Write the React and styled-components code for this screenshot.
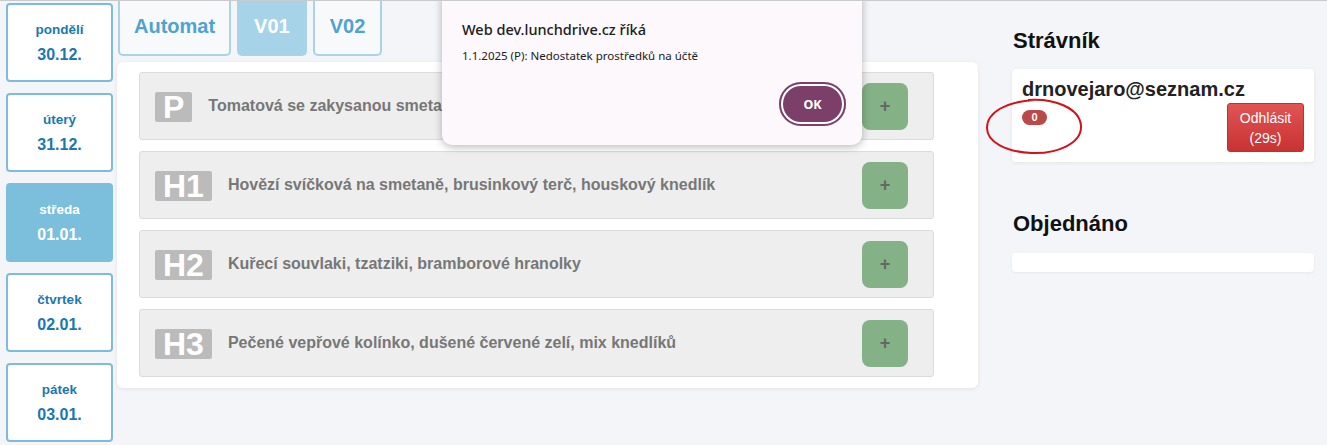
import React from "react";
import styled, { createGlobalStyle } from "styled-components";

const GlobalStyle = createGlobalStyle`
  html, body {
    margin: 0;
    padding: 0;
    background: #f4f5f9;
    font-family: "Liberation Sans", Arial, sans-serif;
  }
`;

const Page = styled.div`
  position: relative;
  display: flex;
  align-items: flex-start;
  height: 444px;
  overflow: hidden;
  border-top: 1px solid #c9cacd;
  background: #f4f5f9;
`;

/* Left column with days */
const DayColumn = styled.div`
  display: flex;
  flex-direction: column;
  gap: 11px;
  width: 107px;
  margin: 2px 0 0 6px;
`;

const DayBox = styled.div`
  box-sizing: border-box;
  height: 79px;
  border: 2px solid #7dbcdc;
  border-radius: 4px;
  background: ${(p) => (p.$active ? "#7bbfdd" : "#ffffff")};
  border-color: ${(p) => (p.$active ? "#7bbfdd" : "#7dbcdc")};
  color: ${(p) => (p.$active ? "#ffffff" : "#1a78b0")};
  display: flex;
  flex-direction: column;
  align-items: center;
  padding-top: 17px;
  font-weight: bold;
`;

const DayName = styled.div`
  font-size: 13.5px;
  line-height: 16px;
`;

const DayDate = styled.div`
  font-size: 16px;
  line-height: 18px;
  margin-top: 8px;
`;

/* Middle column */
const Main = styled.div`
  width: 861px;
  margin-left: 4px;
`;

const Tabs = styled.div`
  display: flex;
  gap: 6px;
  padding-left: 1px;
`;

const Tab = styled.div`
  box-sizing: border-box;
  height: 55px;
  padding: 0 ${(p) => p.$pad || 14}px 2px;
  border: 2px solid #a9d3e6;
  border-top: none;
  border-radius: 0 0 5px 5px;
  background: ${(p) => (p.$active ? "#a6d3e8" : "#f8f9fb")};
  color: ${(p) => (p.$active ? "#ffffff" : "#4fa3d1")};
  font-size: 20px;
  font-weight: bold;
  display: flex;
  align-items: center;
`;

const Card = styled.div`
  margin-top: 6px;
  background: #ffffff;
  border-radius: 6px;
  box-shadow: 0 1px 4px rgba(0, 0, 0, 0.08);
  padding: 10px 44px 11px 22px;
  display: flex;
  flex-direction: column;
  gap: 11px;
`;

const MealRow = styled.div`
  box-sizing: border-box;
  height: 68px;
  background: #eeeeee;
  border: 1px solid #dcdcdc;
  border-radius: 3px;
  display: flex;
  align-items: center;
  padding: 0 25px 0 15px;
`;

const MealBadge = styled.span`
  background: #bbbbbb;
  color: #ffffff;
  font-size: 32px;
  font-weight: bold;
  line-height: 30px;
  height: 30px;
  padding: 0 8px;
  border-radius: 2px;
  margin-top: 1px;
`;

const MealName = styled.span`
  flex: 1;
  margin-left: 16px;
  font-size: 16px;
  font-weight: bold;
  color: #777777;
`;

const AddButton = styled.div`
  width: 46px;
  height: 47px;
  border-radius: 8px;
  background: #85b187;
  color: #666666;
  font-size: 18px;
  font-weight: bold;
  display: flex;
  align-items: center;
  justify-content: center;
`;

/* Right column */
const Side = styled.div`
  width: 302px;
  margin-left: 34px;
  padding-top: 28px;
`;

const Heading = styled.h2`
  margin: 0;
  font-size: 22px;
  line-height: 24px;
  font-weight: bold;
  color: #111111;
  padding-left: 1px;
`;

const UserCard = styled.div`
  position: relative;
  margin-top: 16px;
  background: #ffffff;
  border-radius: 4px;
  box-shadow: 0 1px 4px rgba(0, 0, 0, 0.07);
  padding: 8px 10px 10px 10px;
`;

const Email = styled.div`
  font-size: 20px;
  font-weight: bold;
  line-height: 24px;
  color: #222222;
`;

const UserRow = styled.div`
  display: flex;
  justify-content: space-between;
  align-items: flex-start;
`;

const Credit = styled.span`
  margin-top: 9px;
  width: 25px;
  height: 15px;
  border-radius: 8px;
  background: #b94a48;
  color: #ffffff;
  font-size: 11px;
  font-weight: bold;
  line-height: 15px;
  text-align: center;
`;

const LogoutButton = styled.div`
  margin-top: 2px;
  width: 77px;
  height: 49px;
  box-sizing: border-box;
  border-radius: 3px;
  border: 1px solid #b93333;
  background: linear-gradient(#e25454, #c83232);
  color: #ffffff;
  font-size: 14px;
  line-height: 20px;
  text-align: center;
  padding-top: 4px;
`;

const Annotation = styled.svg`
  position: absolute;
  left: -28px;
  top: 27px;
  pointer-events: none;
`;

const Ordered = styled.div`
  margin-top: 17px;
  height: 19px;
  background: #ffffff;
  border-radius: 4px;
  box-shadow: 0 1px 3px rgba(0, 0, 0, 0.06);
`;

const SecondHeading = styled(Heading)`
  margin-top: 50px;
`;

/* Browser alert dialog */
const Dialog = styled.div`
  position: absolute;
  left: 442px;
  top: -12px;
  width: 420px;
  height: 156px;
  box-sizing: border-box;
  background: #fdf8fc;
  border-radius: 10px;
  box-shadow: 0 2px 8px rgba(0, 0, 0, 0.28);
  padding: 30px 16px 17px 20px;
  display: flex;
  flex-direction: column;
  font-family: "Noto Sans", "Open Sans", sans-serif;
`;

const DialogTitle = styled.div`
  font-size: 14.5px;
  line-height: 20px;
  color: #202020;
  font-weight: 500;
`;

const DialogText = styled.div`
  margin-top: 9px;
  font-size: 11.5px;
  line-height: 16px;
  color: #202020;
`;

const DialogActions = styled.div`
  margin-top: auto;
  display: flex;
  justify-content: flex-end;
`;

const OkButton = styled.div`
  width: 67px;
  height: 44px;
  border-radius: 22px;
  background: #7b3f6a;
  box-shadow: inset 0 0 0 2px #7b3f6a, inset 0 0 0 4px #ffffff;
  color: #ffffff;
  font-size: 12.5px;
  font-weight: bold;
  display: flex;
  align-items: center;
  justify-content: center;
  margin-bottom: 2px;
`;

const days = [
  { name: "pondělí", date: "30.12." },
  { name: "úterý", date: "31.12." },
  { name: "středa", date: "01.01.", active: true },
  { name: "čtvrtek", date: "02.01." },
  { name: "pátek", date: "03.01." },
];

const meals = [
  { code: "P", name: "Tomatová se zakysanou smetanou" },
  { code: "H1", name: "Hovězí svíčková na smetaně, brusinkový terč, houskový knedlík" },
  { code: "H2", name: "Kuřecí souvlaki, tzatziki, bramborové hranolky" },
  { code: "H3", name: "Pečené vepřové kolínko, dušené červené zelí, mix knedlíků" },
];

const App = () => {
  return (
    <>
      <GlobalStyle />
      <Page>
        <DayColumn>
          {days.map((d) => (
            <DayBox key={d.date} $active={d.active}>
              <DayName>{d.name}</DayName>
              <DayDate>{d.date}</DayDate>
            </DayBox>
          ))}
        </DayColumn>

        <Main>
          <Tabs>
            <Tab $pad={14}>Automat</Tab>
            <Tab $pad={15} $active>
              V01
            </Tab>
            <Tab $pad={15}>V02</Tab>
          </Tabs>
          <Card>
            {meals.map((m) => (
              <MealRow key={m.code}>
                <MealBadge>{m.code}</MealBadge>
                <MealName>{m.name}</MealName>
                <AddButton>+</AddButton>
              </MealRow>
            ))}
          </Card>
        </Main>

        <Side>
          <Heading>Strávník</Heading>
          <UserCard>
            <Email>drnovejaro@seznam.cz</Email>
            <UserRow>
              <Credit>0</Credit>
              <LogoutButton>
                Odhlásit
                <br />
                (29s)
              </LogoutButton>
            </UserRow>
            <Annotation width="102" height="62" viewBox="0 0 102 62">
              <path
                d="M44 4 C70 2 96 12 97 30 C98 48 72 58 48 57 C22 56 3 46 3 32 C3 16 22 6 50 4"
                fill="none"
                stroke="#d2121c"
                strokeWidth="2"
              />
            </Annotation>
          </UserCard>
          <SecondHeading>Objednáno</SecondHeading>
          <Ordered />
        </Side>

        <Dialog>
          <DialogTitle>Web dev.lunchdrive.cz říká</DialogTitle>
          <DialogText>1.1.2025 (P): Nedostatek prostředků na účtě</DialogText>
          <DialogActions>
            <OkButton>OK</OkButton>
          </DialogActions>
        </Dialog>
      </Page>
    </>
  );
};

export default App;
